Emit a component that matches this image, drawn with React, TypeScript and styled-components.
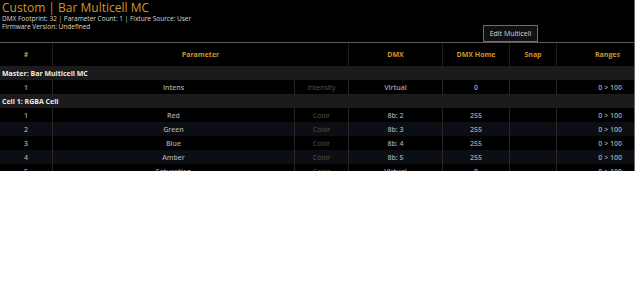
import React from 'react';
import styled, { createGlobalStyle } from 'styled-components';

const GlobalStyle = createGlobalStyle`
  html, body {
    margin: 0;
    padding: 0;
    background: #ffffff;
  }
  body {
    font-family: "Open Sans", "Liberation Sans", sans-serif;
    -webkit-font-smoothing: antialiased;
  }
`;

const Panel = styled.div`
  width: 634px;
  height: 171px;
  background: #000;
  border-right: 1px solid #6a6a6a;
  overflow: hidden;
`;

const InfoBar = styled.div`
  height: 43px;
  position: relative;
  padding: 1px 0 0 2px;
  box-sizing: border-box;
  border-bottom: 1px solid #5c5c5c;
`;

const Title = styled.div`
  color: #d0952c;
  font-size: 12px;
  line-height: 14px;
`;

const Meta = styled.div`
  color: #d8d8d8;
  font-size: 6.5px;
  line-height: 8px;
`;

const EditButton = styled.button`
  position: absolute;
  left: 483px;
  top: 25px;
  width: 55px;
  height: 17px;
  padding: 0;
  background: #101010;
  border: 1px solid #6d6d6d;
  color: #d6d6d6;
  font-family: inherit;
  font-size: 7px;
`;

const cols = '52px 242px 54px 94px 67px 47px 1fr';

const HeadRow = styled.div`
  display: grid;
  grid-template-columns: 52px 296px 94px 67px 47px 1fr;
  height: 23px;
`;

const HeadCell = styled.div<{ $align?: string }>`
  display: flex;
  align-items: center;
  justify-content: ${(p) => p.$align ?? 'center'};
  padding-right: ${(p) => (p.$align ? '14px' : '0')};
  color: #d0952c;
  font-size: 7px;
  font-weight: 700;
  border-left: 1px solid #1e1e1e;
  &:first-child {
    border-left: none;
  }
`;

const GroupRow = styled.div`
  height: 14px;
  display: flex;
  align-items: center;
  padding-left: 2px;
  background: #1b1b1b;
  color: #ececec;
  font-size: 7px;
  font-weight: 700;
`;

const Row = styled.div<{ $alt?: boolean }>`
  display: grid;
  grid-template-columns: ${cols};
  height: 14px;
  background: ${(p) => (p.$alt ? '#0b0e12' : '#000')};
`;

const Cell = styled.div<{ $dim?: boolean; $align?: string }>`
  display: flex;
  align-items: center;
  justify-content: ${(p) => p.$align ?? 'center'};
  padding-right: ${(p) => (p.$align ? '12px' : '0')};
  color: ${(p) => (p.$dim ? '#555555' : '#a4a4a4')};
  font-size: 7px;
  font-weight: ${(p) => (p.$dim ? 400 : 600)};
  border-left: 1px solid #262626;
  white-space: nowrap;
  &:first-child {
    border-left: none;
  }
`;

type Param = {
  n: number;
  name: string;
  kind: string;
  dmx: string;
  home: string;
};

const groups: { label: string; params: Param[] }[] = [
  {
    label: 'Master: Bar Multicell MC',
    params: [{ n: 1, name: 'Intens', kind: 'Intensity', dmx: 'Virtual', home: '0' }],
  },
  {
    label: 'Cell 1: RGBA Cell',
    params: [
      { n: 1, name: 'Red', kind: 'Color', dmx: '8b: 2', home: '255' },
      { n: 2, name: 'Green', kind: 'Color', dmx: '8b: 3', home: '255' },
      { n: 3, name: 'Blue', kind: 'Color', dmx: '8b: 4', home: '255' },
      { n: 4, name: 'Amber', kind: 'Color', dmx: '8b: 5', home: '255' },
      { n: 5, name: 'Saturation', kind: 'Color', dmx: 'Virtual', home: '0' },
    ],
  },
];

export default function App() {
  return (
    <>
      <GlobalStyle />
      <Panel>
        <InfoBar>
          <Title>Custom | Bar Multicell MC</Title>
          <Meta>DMX Footprint: 32 | Parameter Count: 1 | Fixture Source: User</Meta>
          <Meta>Firmware Version: Undefined</Meta>
          <EditButton>Edit Multicell</EditButton>
        </InfoBar>
        <HeadRow>
          <HeadCell>#</HeadCell>
          <HeadCell>Parameter</HeadCell>
          <HeadCell>DMX</HeadCell>
          <HeadCell>DMX Home</HeadCell>
          <HeadCell>Snap</HeadCell>
          <HeadCell $align="flex-end">Ranges</HeadCell>
        </HeadRow>
        {groups.map((g) => (
          <React.Fragment key={g.label}>
            <GroupRow>{g.label}</GroupRow>
            {g.params.map((p, i) => (
              <Row key={p.name} $alt={i % 2 === 1}>
                <Cell>{p.n}</Cell>
                <Cell>{p.name}</Cell>
                <Cell $dim>{p.kind}</Cell>
                <Cell>{p.dmx}</Cell>
                <Cell>{p.home}</Cell>
                <Cell />
                <Cell $align="flex-end">0 &gt; 100</Cell>
              </Row>
            ))}
          </React.Fragment>
        ))}
      </Panel>
    </>
  );
}
